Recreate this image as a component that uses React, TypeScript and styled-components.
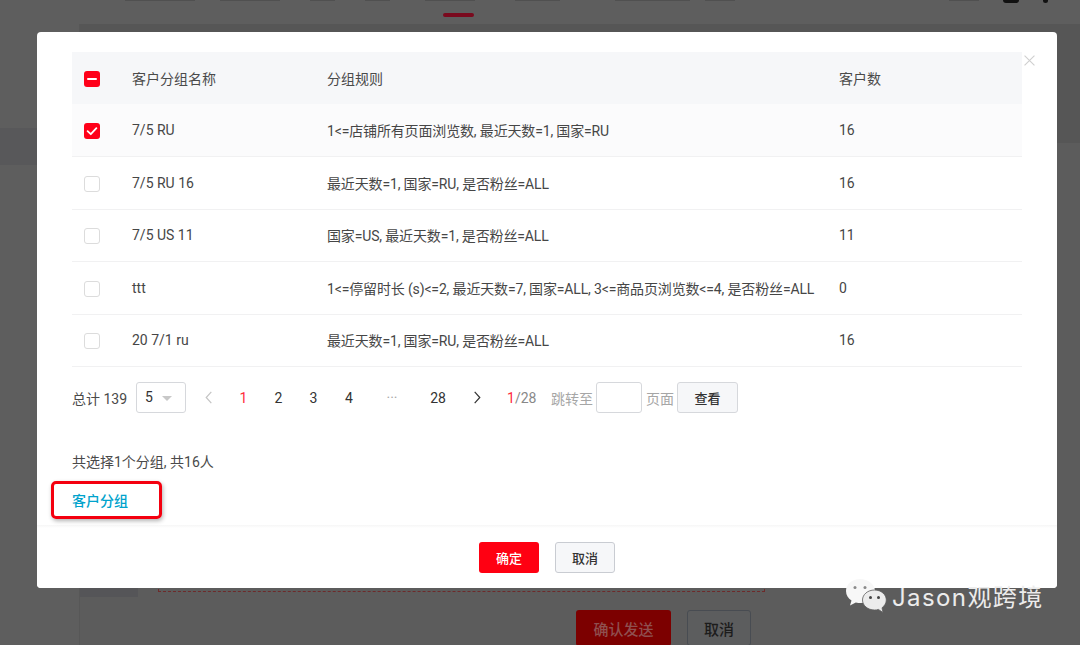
import styled, { createGlobalStyle } from 'styled-components';

const rows = [
  { name: '7/5 RU', rule: '1<=店铺所有页面浏览数, 最近天数=1, 国家=RU', count: 16, checked: true },
  { name: '7/5 RU 16', rule: '最近天数=1, 国家=RU, 是否粉丝=ALL', count: 16, checked: false },
  { name: '7/5 US 11', rule: '国家=US, 最近天数=1, 是否粉丝=ALL', count: 11, checked: false },
  { name: 'ttt', rule: '1<=停留时长 (s)<=2, 最近天数=7, 国家=ALL, 3<=商品页浏览数<=4, 是否粉丝=ALL', count: 0, checked: false },
  { name: '20 7/1 ru', rule: '最近天数=1, 国家=RU, 是否粉丝=ALL', count: 16, checked: false },
];

const navMarks = [
  { left: 25, width: 70 },
  { left: 25, width: 60 },
  { left: 30, width: 25 },
  { left: 30, width: 25 },
  { left: 35, width: 50 },
  { left: 40, width: 45 },
  { left: 55, width: 75 },
  { left: 15, width: 30 },
];

const App = () => {
  return (
    <Page>
      <GlobalStyle />
      <TopBar>
        <NavMarks>
          {navMarks.map((m, i) => (
            <NavMark key={i} $left={m.left} $width={m.width} />
          ))}
        </NavMarks>
        <ActiveLine />
        <UserMarks>
          <NavMark $left={0} $width={30} />
          <UserBlob $width={16} />
          <UserBlob $width={5} />
        </UserMarks>
      </TopBar>
      <Behind>
        <Sidebar>
          <SideItem />
        </Sidebar>
        <Content>
          <LowerRow>
            <Stub />
            <DashedBox />
          </LowerRow>
          <ActionRow>
            <SendButton>确认发送</SendButton>
            <BackCancel>取消</BackCancel>
          </ActionRow>
        </Content>
      </Behind>

      <Modal>
        <CloseIcon viewBox="0 0 10 10">
          <path d="M0.5 0.5L9.5 9.5M9.5 0.5L0.5 9.5" />
        </CloseIcon>
        <ModalBody>
          <Table>
            <colgroup>
              <col width={60} />
              <col width={195} />
              <col width={512} />
              <col width={183} />
            </colgroup>
            <thead>
              <tr>
                <HeadCell>
                  <CheckBox $on>
                    <svg viewBox="0 0 16 16" width="16" height="16">
                      <path d="M4 8H12" stroke="#fff" strokeWidth="2" strokeLinecap="round" />
                    </svg>
                  </CheckBox>
                </HeadCell>
                <HeadCell>客户分组名称</HeadCell>
                <HeadCell>分组规则</HeadCell>
                <HeadCell>客户数</HeadCell>
              </tr>
            </thead>
            <tbody>
              {rows.map(r => (
                <Row key={r.name} $active={r.checked}>
                  <Cell>
                    <CheckBox $on={r.checked}>
                      {r.checked && (
                        <svg viewBox="0 0 16 16" width="16" height="16">
                          <path d="M3.6 8.2L6.8 11.2L12.4 5.2" fill="none" stroke="#fff" strokeWidth="1.8" strokeLinecap="round" strokeLinejoin="round" />
                        </svg>
                      )}
                    </CheckBox>
                  </Cell>
                  <Cell>{r.name}</Cell>
                  <RuleCell>{r.rule}</RuleCell>
                  <Cell>{r.count}</Cell>
                </Row>
              ))}
            </tbody>
          </Table>

          <Pagination>
            <Total>总计 139</Total>
            <SizeSelect>
              5
              <Caret />
            </SizeSelect>
            <PageItem $width={35} $muted>
              <Chevron viewBox="0 0 8 14" $color="#c4c4c4">
                <path d="M6.5 1L1 7L6.5 13" />
              </Chevron>
            </PageItem>
            <PageItem $width={35} $current>1</PageItem>
            <PageItem $width={35}>2</PageItem>
            <PageItem $width={35}>3</PageItem>
            <PageItem $width={36}>4</PageItem>
            <PageItem $width={50} $muted>···</PageItem>
            <PageItem $width={42}>28</PageItem>
            <PageItem $width={36}>
              <Chevron viewBox="0 0 8 14" $color="#333">
                <path d="M1.5 1L7 7L1.5 13" />
              </Chevron>
            </PageItem>
            <PageCount>
              <em>1</em>/28
            </PageCount>
            <JumpLabel>跳转至</JumpLabel>
            <JumpInput />
            <JumpLabel>页面</JumpLabel>
            <ViewButton>查看</ViewButton>
          </Pagination>

          <Summary>共选择1个分组, 共16人</Summary>
          <TabLabel>
            客户分组
            <Highlight />
          </TabLabel>
        </ModalBody>
        <Footer>
          <PrimaryButton>确定</PrimaryButton>
          <GhostButton>取消</GhostButton>
        </Footer>
      </Modal>

      <Watermark>
        <svg width="42" height="36" viewBox="0 0 42 36">
          <path d="M15 1C7 1 1 6.500 1 13C1 17 3.200 20.400 6.500 22.600L5 27.500L10.800 24.400C12.500 24.900 14 25 16 25C23 25 30 19.500 30 13C30 6.500 23 1 15 1Z" fill="#f7f7f7" />
          <circle cx="10" cy="9.500" r="1.500" fill="#8a8a8a" />
          <circle cx="20" cy="9.500" r="1.500" fill="#8a8a8a" />
          <path d="M29.500 12C22.800 12 17.500 16.500 17.500 22C17.500 27.500 22.800 32 29.500 32C31 32 32.200 31.800 33.400 31.400L38 34.500L37 29.800C39.600 27.800 41.300 25 41.300 22C41.300 16.500 36.200 12 29.500 12Z" fill="#ececec" stroke="#5c5c5c" strokeWidth="0.8" />
          <circle cx="25.500" cy="19.500" r="1.500" fill="#444" />
          <circle cx="33.500" cy="19.500" r="1.500" fill="#444" />
        </svg>
        <WatermarkText>Jason观跨境</WatermarkText>
      </Watermark>
    </Page>
  );
};

const GlobalStyle = createGlobalStyle`
  html, body {
    margin: 0;
    padding: 0;
    background: #5c5c5c;
  }
  * {
    box-sizing: border-box;
  }
`;

const Page = styled.div`
  position: relative;
  display: flex;
  flex-direction: column;
  width: 1080px;
  height: 645px;
  overflow: hidden;
  font-family: Roboto, 'Noto Sans CJK SC', sans-serif;
  background: #5c5c5c;
`;

const TopBar = styled.div`
  position: relative;
  flex: none;
  display: flex;
  justify-content: space-between;
  align-items: flex-start;
  height: 24px;
  padding: 0 32px 0 100px;
  background: #5e5e5e;
`;

const NavMarks = styled.div`
  display: flex;
`;

const NavMark = styled.div<{ $left: number; $width: number }>`
  height: 1px;
  margin-left: ${p => p.$left}px;
  width: ${p => p.$width}px;
  background: #505050;
`;

const ActiveLine = styled.div`
  position: absolute;
  left: 443px;
  top: 13px;
  width: 31px;
  height: 4px;
  border-radius: 2px;
  background: #7a0a1e;
`;

const UserMarks = styled.div`
  display: flex;
  gap: 24px;
`;

const UserBlob = styled.div<{ $width: number }>`
  width: ${p => p.$width}px;
  height: 3px;
  border-radius: 0 0 8px 8px;
  background: #111;
`;

const Behind = styled.div`
  flex: 1;
  display: flex;
  min-height: 0;
`;

const Sidebar = styled.div`
  flex: none;
  width: 80px;
  padding-top: 104px;
  background: #5e5e5e;
  border-right: 1px solid #575757;
`;

const SideItem = styled.div`
  height: 37px;
  background: #58585a;
`;

const Content = styled.div`
  flex: 1;
  padding-top: 560px;
  background: linear-gradient(#565656 0 119px, #5c5c5c 119px);
`;

const LowerRow = styled.div`
  display: flex;
  align-items: flex-start;
`;

const Stub = styled.div`
  width: 58px;
  height: 13px;
  background: #555558;
`;

const DashedBox = styled.div`
  width: 607px;
  height: 8px;
  margin-left: 20px;
  border: 1px dashed #6e2a2a;
`;

const ActionRow = styled.div`
  display: flex;
  gap: 16px;
  margin-top: 13px;
  margin-left: 496px;
`;

const SendButton = styled.button`
  width: 95px;
  height: 36px;
  border: none;
  border-radius: 3px;
  background: #7c0000;
  color: #8f4f4f;
  font: 500 15px Roboto, 'Noto Sans CJK SC', sans-serif;
`;

const BackCancel = styled.button`
  width: 64px;
  height: 36px;
  border: 1px solid #484c52;
  border-radius: 3px;
  background: #5c5d5e;
  color: #1c1c1c;
  font: 500 15px Roboto, 'Noto Sans CJK SC', sans-serif;
`;

const Modal = styled.div`
  position: absolute;
  left: 37px;
  top: 32px;
  display: flex;
  flex-direction: column;
  width: 1020px;
  height: 556px;
  border-radius: 4px;
  background: #fff;
`;

const CloseIcon = styled.svg`
  position: absolute;
  top: 23px;
  right: 22px;
  width: 11px;
  height: 11px;
  fill: none;
  stroke: #cfcfcf;
  stroke-width: 1;
`;

const ModalBody = styled.div`
  flex: 1;
  padding: 20px 35px 0;
  color: #4a4a4a;
  font-size: 14px;
`;

const Table = styled.table`
  width: 950px;
  border-collapse: collapse;
  table-layout: fixed;
`;

const HeadCell = styled.th`
  height: 52px;
  padding: 0;
  background: #f6f7f9;
  font-weight: 400;
  font-size: 14px;
  text-align: left;
  color: #4a4a4a;
  &:first-child {
    padding-left: 12px;
  }
`;

const Row = styled.tr<{ $active: boolean }>`
  height: 52.5px;
  background: ${p => (p.$active ? '#fbfbfc' : '#fff')};
  border-bottom: 1px solid #f1f1f2;
`;

const Cell = styled.td`
  padding: 0;
  font-size: 14px;
  color: #464646;
  white-space: nowrap;
  &:first-child {
    padding-left: 12px;
  }
`;

const RuleCell = styled(Cell)`
  letter-spacing: -0.15px;
`;

const CheckBox = styled.span<{ $on: boolean }>`
  display: block;
  width: 16px;
  height: 16px;
  margin-top: 2px;
  border-radius: 3px;
  border: ${p => (p.$on ? 'none' : '1px solid #dcdcdc')};
  background: ${p => (p.$on ? '#ff0019' : '#fff')};
  svg {
    display: block;
  }
`;

const Pagination = styled.div`
  display: flex;
  align-items: center;
  height: 31px;
  margin-top: 15px;
`;

const Total = styled.span`
  width: 64px;
  white-space: nowrap;
`;

const SizeSelect = styled.div`
  position: relative;
  width: 50px;
  height: 31px;
  padding-left: 8px;
  margin-right: 5px;
  border: 1px solid #d6d8dc;
  border-radius: 3px;
  line-height: 29px;
  font-size: 14px;
  color: #333;
`;

const Caret = styled.span`
  position: absolute;
  top: 13px;
  right: 13px;
  border-left: 5px solid transparent;
  border-right: 5px solid transparent;
  border-top: 5px solid #c8c8c8;
`;

const PageItem = styled.span<{ $width: number; $current?: boolean; $muted?: boolean }>`
  display: flex;
  align-items: center;
  justify-content: center;
  width: ${p => p.$width}px;
  font-size: 14px;
  color: ${p => (p.$current ? '#ff2a3c' : p.$muted ? '#a8a8a8' : '#333')};
`;

const Chevron = styled.svg<{ $color: string }>`
  width: 8px;
  height: 13px;
  fill: none;
  stroke: ${p => p.$color};
  stroke-width: 1.3;
`;

const PageCount = styled.span`
  width: 44px;
  margin-left: 12px;
  color: #888;
  em {
    font-style: normal;
    color: #ff2a3c;
  }
`;

const JumpLabel = styled.span`
  color: #a6a6a6;
  white-space: nowrap;
`;

const JumpInput = styled.div`
  width: 46px;
  height: 31px;
  margin: 0 4px 0 3px;
  border: 1px solid #d6d8dc;
  border-radius: 3px;
  background: #fff;
`;

const ViewButton = styled.button`
  width: 61px;
  height: 31px;
  margin-left: 3px;
  padding: 0;
  border: 1px solid #d6d8dc;
  border-radius: 3px;
  background: #f6f7f9;
  color: #333;
  font: 500 13px Roboto, 'Noto Sans CJK SC', sans-serif;
`;

const Summary = styled.div`
  margin-top: 39px;
  line-height: 20px;
`;

const TabLabel = styled.div`
  position: relative;
  width: fit-content;
  margin-top: 19px;
  line-height: 20px;
  font-weight: 500;
  color: #00a3cc;
`;

const Highlight = styled.span`
  position: absolute;
  left: -21px;
  top: -10px;
  width: 111px;
  height: 38px;
  border: 3px solid #f4000f;
  border-radius: 5px;
  box-shadow: 1px 2px 4px rgba(0, 0, 0, 0.3);
`;

const Footer = styled.div`
  flex: none;
  display: flex;
  justify-content: center;
  gap: 16px;
  height: 63px;
  padding-top: 17px;
  background: linear-gradient(#f6f6f6, #fff 3px);
  border-radius: 0 0 4px 4px;
`;

const PrimaryButton = styled.button`
  width: 60px;
  height: 31px;
  padding: 0;
  border: none;
  border-radius: 3px;
  background: #ff0012;
  color: #fff;
  font: 500 13px Roboto, 'Noto Sans CJK SC', sans-serif;
`;

const GhostButton = styled(PrimaryButton)`
  border: 1px solid #c9ccd2;
  background: #f6f7f9;
  color: #333;
`;

const Watermark = styled.div`
  position: absolute;
  left: 845px;
  top: 578px;
  display: flex;
  align-items: center;
  gap: 5px;
`;

const WatermarkText = styled.span`
  margin-top: -2px;
  font-family: Inter, 'Noto Sans CJK SC', sans-serif;
  font-size: 24px;
  letter-spacing: 1.4px;
  color: #ececec;
  white-space: nowrap;
`;

export default App;
